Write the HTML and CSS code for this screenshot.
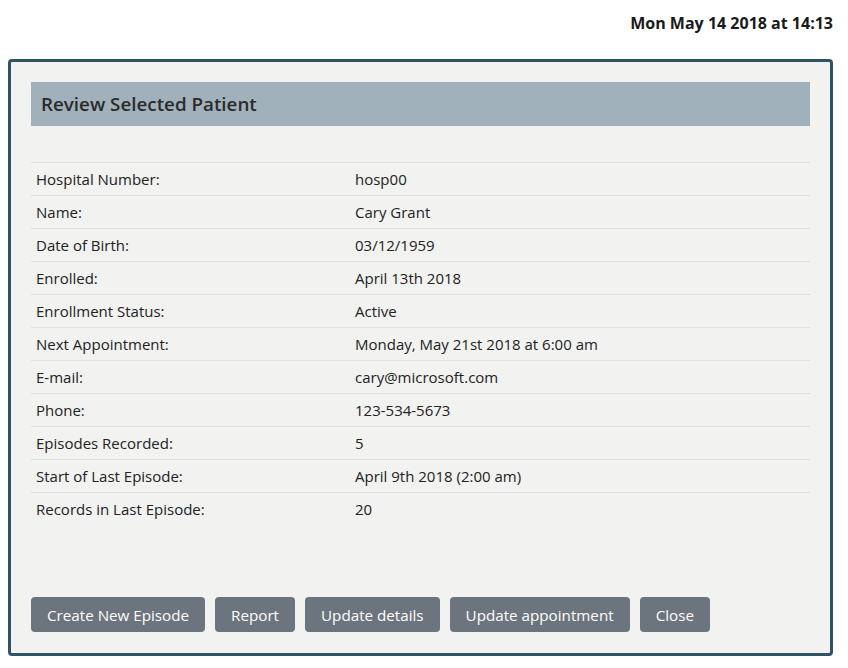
FILE: index.html
```html
<!DOCTYPE html>
<html>
<head>
<meta charset="utf-8">
<link rel="stylesheet" href="styles.css">
</head>
<body>
<div class="topbar"><span class="now">Mon May 14 2018 at 14:13</span></div>
<div class="panel">
  <div class="panel-head">Review Selected Patient</div>
  <table class="details">
    <tr><td class="lbl">Hospital Number:</td><td>hosp00</td></tr>
    <tr><td class="lbl">Name:</td><td>Cary Grant</td></tr>
    <tr><td class="lbl">Date of Birth:</td><td>03/12/1959</td></tr>
    <tr><td class="lbl">Enrolled:</td><td>April 13th 2018</td></tr>
    <tr><td class="lbl">Enrollment Status:</td><td>Active</td></tr>
    <tr><td class="lbl">Next Appointment:</td><td>Monday, May 21st 2018 at 6:00 am</td></tr>
    <tr><td class="lbl">E-mail:</td><td>cary@microsoft.com</td></tr>
    <tr><td class="lbl">Phone:</td><td>123-534-5673</td></tr>
    <tr><td class="lbl">Episodes Recorded:</td><td>5</td></tr>
    <tr><td class="lbl">Start of Last Episode:</td><td>April 9th 2018 (2:00 am)</td></tr>
    <tr><td class="lbl">Records in Last Episode:</td><td>20</td></tr>
  </table>
  <div class="actions">
    <button class="btn">Create New Episode</button>
    <button class="btn">Report</button>
    <button class="btn">Update details</button>
    <button class="btn">Update appointment</button>
    <button class="btn">Close</button>
  </div>
</div>
</body>
</html>
```
FILE: styles.css
```css
* { box-sizing: border-box; }
body {
  margin: 0;
  padding: 0 8px;
  font-family: "Open Sans", "Noto Sans", sans-serif;
  color: #212529;
  background: #fff;
}
.topbar {
  display: flex;
  justify-content: flex-end;
  height: 59px;
  padding-top: 13px;
  padding-right: 7px;
}
.now {
  font-weight: 700;
  font-size: 16px;
  line-height: 20px;
  color: #1a1a1a;
}
.panel {
  width: 825px;
  height: 597px;
  border: 3px solid #2e5567;
  border-radius: 4px;
  background: #f2f2f1;
  padding: 20px 20px 0 20px;
  display: flex;
  flex-direction: column;
}
.panel-head {
  height: 44px;
  background: #a0b1bc;
  padding-left: 10px;
  display: flex;
  align-items: center;
  font-size: 18.8px;
  font-weight: 600;
  color: #2b2b2b;
  margin-bottom: 36px;
}
.details {
  width: 100%;
  border-collapse: collapse;
  font-size: 15px;
  color: #222;
}
.details td {
  height: 33px;
  padding: 0 5px;
  border-top: 1px solid #dcdfe3;
  vertical-align: middle;
}
.details td.lbl { width: 319px; }
.actions {
  margin-top: auto;
  margin-bottom: 21px;
  display: flex;
  gap: 10px;
}
.btn {
  height: 35px;
  padding: 0 16px;
  border: none;
  border-radius: 4px;
  background: #6c747d;
  color: #fff;
  font-family: inherit;
  font-size: 15.2px;
}
```
